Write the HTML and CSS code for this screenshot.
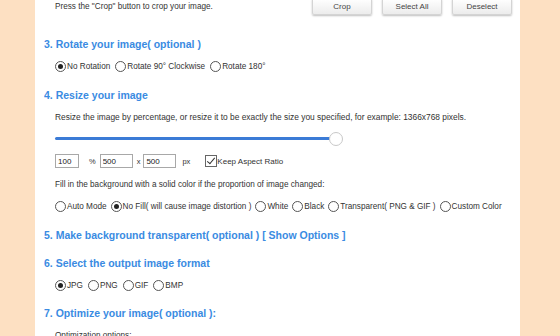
FILE: index.html
```html
<!DOCTYPE html>
<html>
<head>
  <meta name="viewport" content="width=device-width, initial-scale=1.0">
  <link rel="stylesheet" href="styles.css">
</head>
<body>
  <div class="container">
    <!-- Paso de recorte -->
    <div class="crop-row">
      <span class="note">Press the "Crop" button to crop your image.</span>
      <div class="buttons">
        <button class="btn">Crop</button>
        <button class="btn">Select All</button>
        <button class="btn">Deselect</button>
      </div>
    </div>

    <h3 class="step step-3">3. Rotate your image( optional )</h3>
    <div class="options opt-rotate">
      <label><input type="radio" name="rot" checked>No Rotation</label>
      <label><input type="radio" name="rot">Rotate 90° Clockwise</label>
      <label><input type="radio" name="rot">Rotate 180°</label>
    </div>

    <h3 class="step step-4">4. Resize your image</h3>
    <p class="note desc">Resize the image by percentage, or resize it to be exactly the size you specified, for example: 1366x768 pixels.</p>
    <div class="slider">
      <div class="track"></div>
      <div class="thumb"></div>
    </div>
    <div class="size-row">
      <input class="num num-pct" type="text" value="100">
      <span class="unit unit-pct">%</span>
      <input class="num" type="text" value="500">
      <span class="unit unit-x">x</span>
      <input class="num" type="text" value="500">
      <span class="unit unit-px">px</span>
      <label class="keep"><input type="checkbox" checked>Keep Aspect Ratio</label>
    </div>
    <p class="note fill">Fill in the background with a solid color if the proportion of image changed:</p>
    <div class="options opt-fill">
      <label><input type="radio" name="fill">Auto Mode</label>
      <label><input type="radio" name="fill" checked>No Fill( will cause image distortion )</label>
      <label><input type="radio" name="fill">White</label>
      <label><input type="radio" name="fill">Black</label>
      <label><input type="radio" name="fill">Transparent( PNG &amp; GIF )</label>
      <label><input type="radio" name="fill">Custom Color</label>
    </div>

    <h3 class="step step-5">5. Make background transparent( optional ) <a href="#">[ Show Options ]</a></h3>

    <h3 class="step step-6">6. Select the output image format</h3>
    <div class="options opt-format">
      <label><input type="radio" name="fmt" checked>JPG</label>
      <label><input type="radio" name="fmt">PNG</label>
      <label><input type="radio" name="fmt">GIF</label>
      <label><input type="radio" name="fmt">BMP</label>
    </div>

    <h3 class="step step-7">7. Optimize your image( optional ):</h3>
    <p class="note opt-text">Optimization options:</p>
  </div>
</body>
</html>
```

FILE: styles.css
```css
:root {
  --peach: #fde0c2;
  --blue: #3a8be2;
  --text: #333333;
}

html, body {
  margin: 0;
  height: 100%;
  overflow: hidden;
}

body {
  background: var(--peach);
  font-family: "Liberation Sans", Arial, sans-serif;
  color: var(--text);
}

.container {
  width: 485px;
  margin-left: 35px;
  margin-top: -2px;
  min-height: 400px;
  background: #ffffff;
  box-sizing: border-box;
  padding: 0 8px 0 20px;
}

.note {
  font-size: 8.2px;
  line-height: 12px;
  margin: 0;
}

/* fila de recorte */
.crop-row {
  display: flex;
  align-items: center;
  height: 17px;
}

.buttons {
  display: flex;
  gap: 10px;
  margin-left: auto;
}

.btn {
  width: 60px;
  height: 17px;
  padding: 0;
  font-family: inherit;
  font-size: 8px;
  color: #444;
  background: linear-gradient(#ffffff, #ececec);
  border: 1px solid #d4d4d4;
  border-radius: 2px;
  box-shadow: 0 1px 2px rgba(0,0,0,0.25);
}

/* titulos de pasos */
.step {
  margin: 0 0 0 -11px;
  height: 20px;
  line-height: 20px;
  font-size: 10.5px;
  font-weight: bold;
  color: var(--blue);
  transform: scaleY(1.12);
}

.step a {
  color: var(--blue);
  text-decoration: none;
}

.step-3 { margin-top: 19px; }
.step-4 { margin-top: 12px; }
.step-5 { margin-top: 12px; }
.step-6 { margin-top: 8px; }
.step-7 { margin-top: 11px; }

/* grupos de radio */
.options {
  display: flex;
  align-items: center;
  height: 14px;
  font-size: 8.2px;
  gap: 4px;
  white-space: nowrap;
}

.options label {
  display: flex;
  align-items: center;
}

.opt-rotate { margin-top: 5px; gap: 5px; }
.opt-fill { margin-top: 8px; }
.opt-format { margin-top: 5px; gap: 5px; }

input[type="radio"] {
  appearance: none;
  -webkit-appearance: none;
  width: 11px;
  height: 11px;
  margin: 0 1px 0 0;
  border: 1px solid #555;
  border-radius: 50%;
  background: #fff;
  box-sizing: border-box;
  position: relative;
}

input[type="radio"]:checked::after {
  content: "";
  position: absolute;
  left: 2px;
  top: 2px;
  width: 5px;
  height: 5px;
  border-radius: 50%;
  background: #222;
}

.desc { margin-top: 6px; font-size: 8.4px; }

/* deslizador */
.slider {
  position: relative;
  height: 16px;
  margin-top: 8px;
  width: 288px;
}

.track {
  position: absolute;
  left: 0;
  right: 7px;
  top: 6px;
  height: 3px;
  background: #3b7bd6;
  border-radius: 2px;
}

.thumb {
  position: absolute;
  right: 0;
  top: 1px;
  width: 14px;
  height: 14px;
  box-sizing: border-box;
  border: 1px solid #c8c8c8;
  border-radius: 50%;
  background: #fff;
}

/* tamaño */
.size-row {
  display: flex;
  align-items: center;
  height: 14px;
  margin-top: 7px;
  font-size: 7.5px;
}

.num {
  width: 33px;
  height: 14px;
  box-sizing: border-box;
  border: 1px solid #a8a8a8;
  padding: 0 2px;
  font-family: inherit;
  font-size: 8px;
  color: #222;
  outline: none;
}

.num-pct { width: 24px; }

.unit-pct { margin: 0 4px 0 10px; }
.unit-x { margin: 0 3px 0 4px; }
.unit-px { margin-left: 6px; }

.keep {
  display: flex;
  align-items: center;
  margin-left: 15px;
  font-size: 8px;
}

.keep input {
  appearance: none;
  -webkit-appearance: none;
  width: 12px;
  height: 12px;
  margin: 0;
  border: 1px solid #666;
  box-sizing: border-box;
  position: relative;
  background: #fff;
}

.keep input:checked::after {
  content: "";
  position: absolute;
  left: 3px;
  top: 0;
  width: 3px;
  height: 7px;
  border: solid #333;
  border-width: 0 1px 1px 0;
  transform: rotate(40deg);
}

.fill { margin-top: 11px; }
.opt-text { margin-top: 7px; }
```
